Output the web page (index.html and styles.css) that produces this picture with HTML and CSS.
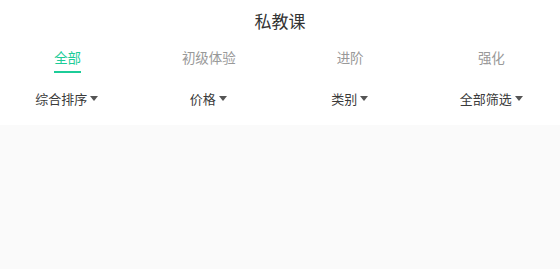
FILE: index.html
```html
<!DOCTYPE html>
<html lang="zh">
<head>
<meta charset="utf-8">
<link rel="stylesheet" href="styles.css">
</head>
<body>
<div class="page">
  <header class="top">
    <h1 class="title">私教课</h1>
    <nav class="tabs">
      <div class="tab active"><span class="tab-label">全部</span></div>
      <div class="tab"><span class="tab-label">初级体验</span></div>
      <div class="tab"><span class="tab-label">进阶</span></div>
      <div class="tab"><span class="tab-label">强化</span></div>
    </nav>
    <div class="filters">
      <div class="filter"><span>综合排序</span><i class="caret"></i></div>
      <div class="filter"><span>价格</span><i class="caret"></i></div>
      <div class="filter"><span>类别</span><i class="caret"></i></div>
      <div class="filter"><span>全部筛选</span><i class="caret"></i></div>
    </div>
  </header>
  <main class="content"></main>
</div>
</body>
</html>
```
FILE: styles.css
```css
* { box-sizing: border-box; }
html, body { margin: 0; padding: 0; }
body {
  width: 560px;
  height: 269px;
  overflow: hidden;
  font-family: "Noto Sans CJK SC", "Noto Sans", sans-serif;
  background: #fafafa;
}
.page { display: flex; flex-direction: column; height: 269px; }
.top { background: #fff; height: 125px; overflow: hidden; }
.title {
  margin: 0;
  height: 42px;
  padding-top: 8px;
  text-align: center;
  font-size: 17px;
  font-weight: 400;
  line-height: 26px;
  color: #333;
}
.tabs {
  display: grid;
  grid-template-columns: repeat(4, 1fr);
  height: 33px;
  margin: 0 -2px 0 -3px;
}
.tab {
  display: flex;
  justify-content: center;
  font-size: 13.5px;
  color: #999;
}
.tab-label {
  display: block;
  height: 31px;
  line-height: 30px;
  border-bottom: 2px solid transparent;
}
.tab.active .tab-label {
  color: #1ccc98;
  border-bottom-color: #1ccc98;
}
.filters {
  display: grid;
  grid-template-columns: repeat(4, 1fr);
  height: 50px;
  align-items: center;
  margin: 0 -2px 0 -4px;
}
.filter {
  display: flex;
  justify-content: center;
  align-items: center;
  font-size: 13px;
  color: #3a3a3a;
  padding-bottom: 3px;
}
.caret {
  display: block;
  width: 0;
  height: 0;
  margin-left: 3px;
  border-left: 4.5px solid transparent;
  border-right: 4.5px solid transparent;
  border-top: 5px solid #555;
}
.content { flex: 1; background: #fafafa; }
```
